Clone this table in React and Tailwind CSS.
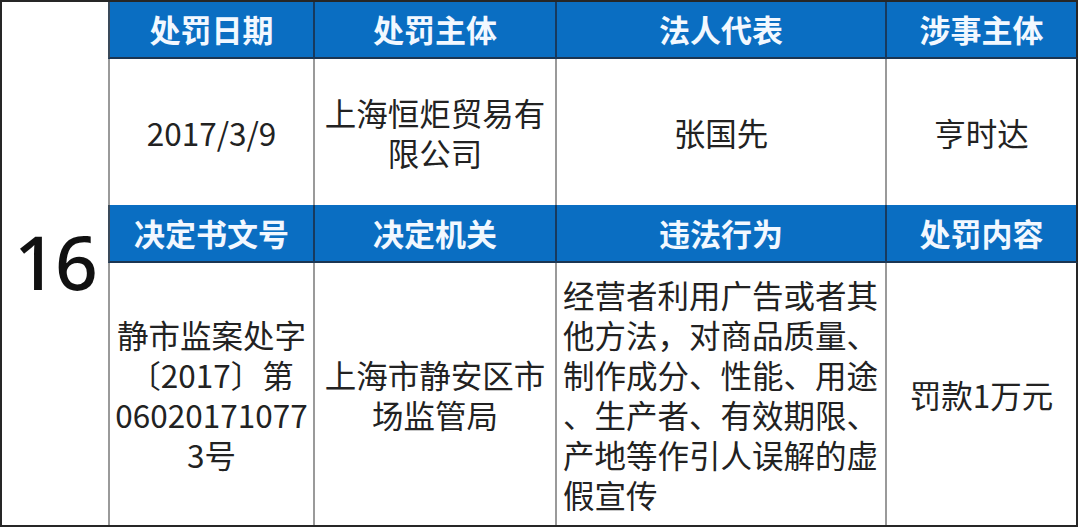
const cjk = { fontFamily: '"Noto Sans CJK SC", "Noto Sans", sans-serif' };

function Head({ children, first }) {
  return (
    <div
      className={
        'flex items-center justify-center bg-[#0a6ec2] border-b-2 border-[#1b3552] text-[31px] font-bold text-[#f2f8ff] ' +
        (first ? 'border-l-2 border-l-[#3a4a5a]' : 'border-l-2 border-l-[#173a5e]')
      }
    >
      {children}
    </div>
  );
}

function Cell({ lines, left }) {
  return (
    <div
      className={
        'flex flex-col justify-center border-l-2 border-[#9a9a9a] text-[31.5px] leading-[40px] text-[#222] ' +
        (left ? 'items-start pl-[6px]' : 'items-center')
      }
    >
      {lines.map((l, i) => (
        <span key={i} className="whitespace-nowrap">
          {l}
        </span>
      ))}
    </div>
  );
}

export default function App() {
  return (
    <div className="flex w-[1080px] h-[527px] bg-white" style={cjk}>
      <div className="flex w-[108px] items-center justify-center border-l-2 border-t-2 border-b-2 border-[#262626]">
        <span
          className="text-[75px] leading-none font-medium text-[#111] pb-[4px] tracking-[-2px]"
          style={{ fontFamily: '"Noto Sans", "Liberation Sans", sans-serif' }}
        >
          16
        </span>
      </div>
      <div className="grid grid-cols-[205px_242px_330px_193px] grid-rows-[57px_146px_58px_262px] border-t-2 border-b-2 border-[#262626]">
        <Head first>处罚日期</Head>
        <Head>处罚主体</Head>
        <Head>法人代表</Head>
        <div className="flex items-center justify-center bg-[#0a6ec2] border-b-2 border-[#1b3552] border-l-2 border-l-[#173a5e] border-r-2 border-r-[#262626] text-[31px] font-bold text-[#f2f8ff]">
          涉事主体
        </div>

        <Cell lines={['2017/3/9']} />
        <Cell lines={['上海恒炬贸易有', '限公司']} />
        <Cell lines={['张国先']} />
        <div className="flex items-center justify-center border-l-2 border-[#9a9a9a] border-r-2 border-r-[#262626] text-[31.5px] leading-[40px] text-[#222]">
          亨时达
        </div>

        <Head first>决定书文号</Head>
        <Head>决定机关</Head>
        <Head>违法行为</Head>
        <div className="flex items-center justify-center bg-[#0a6ec2] border-b-2 border-[#1b3552] border-l-2 border-l-[#173a5e] border-r-2 border-r-[#262626] text-[31px] font-bold text-[#f2f8ff]">
          处罚内容
        </div>

        <Cell lines={['静市监案处字', '〔2017〕第', '06020171077', '3号']} />
        <Cell lines={['上海市静安区市', '场监管局']} />
        <Cell
          left
          lines={[
            '经营者利用广告或者其',
            '他方法，对商品质量、',
            '制作成分、性能、用途',
            '、生产者、有效期限、',
            '产地等作引人误解的虚',
            '假宣传',
          ]}
        />
        <div className="flex items-center justify-center border-l-2 border-[#9a9a9a] border-r-2 border-r-[#262626] text-[31.5px] leading-[40px] text-[#222]">
          罚款1万元
        </div>
      </div>
    </div>
  );
}
